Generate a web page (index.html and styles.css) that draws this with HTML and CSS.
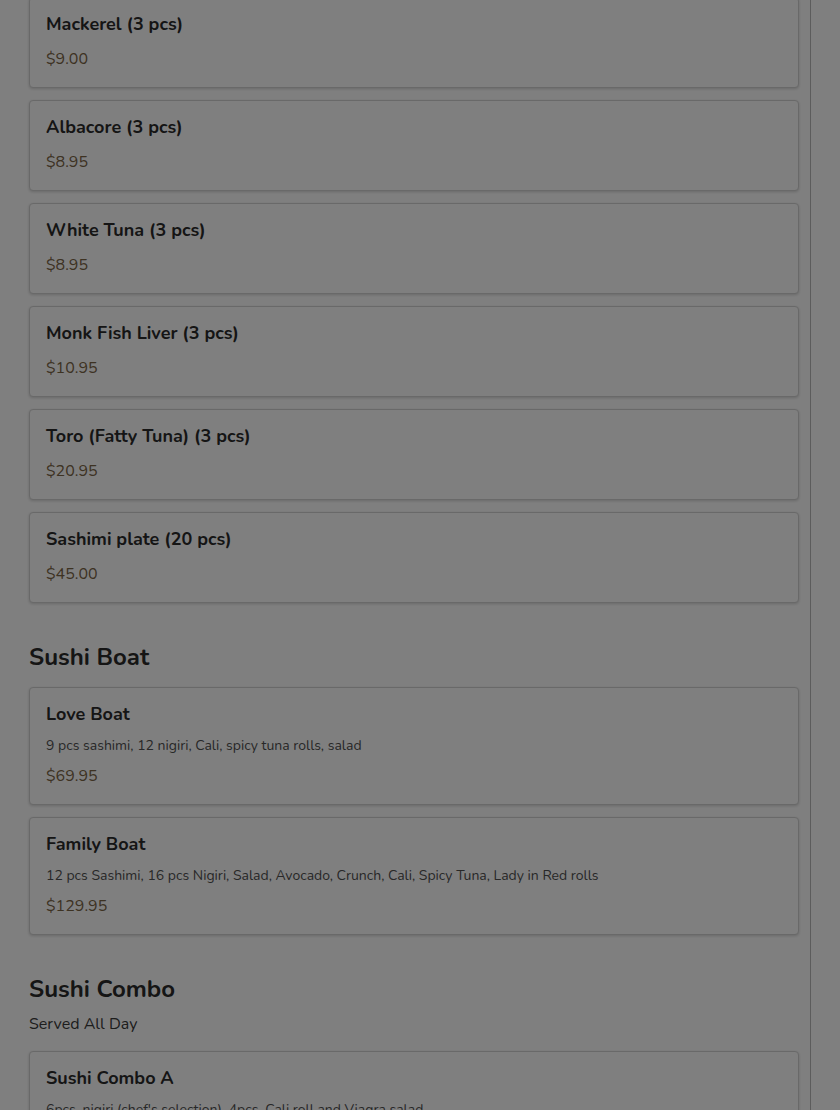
FILE: index.html
```html
<!DOCTYPE html>
<html>
<head>
<meta charset="utf-8">
<link rel="stylesheet" href="styles.css">
</head>
<body>
<div class="page">
  <main class="menu">
    <section class="section first">
      <div class="items">
        <div class="card"><div class="name">Mackerel (3 pcs)</div><div class="price">$9.00</div></div>
        <div class="card"><div class="name">Albacore (3 pcs)</div><div class="price">$8.95</div></div>
        <div class="card"><div class="name">White Tuna (3 pcs)</div><div class="price">$8.95</div></div>
        <div class="card"><div class="name">Monk Fish Liver (3 pcs)</div><div class="price">$10.95</div></div>
        <div class="card"><div class="name">Toro (Fatty Tuna) (3 pcs)</div><div class="price">$20.95</div></div>
        <div class="card"><div class="name">Sashimi plate (20 pcs)</div><div class="price">$45.00</div></div>
      </div>
    </section>
    <section class="section">
      <h2 class="heading">Sushi Boat</h2>
      <div class="items">
        <div class="card"><div class="name">Love Boat</div><div class="desc">9 pcs sashimi, 12 nigiri, Cali, spicy tuna rolls, salad</div><div class="price">$69.95</div></div>
        <div class="card"><div class="name">Family Boat</div><div class="desc">12 pcs Sashimi, 16 pcs Nigiri, Salad, Avocado, Crunch, Cali, Spicy Tuna, Lady in Red rolls</div><div class="price">$129.95</div></div>
      </div>
    </section>
    <section class="section">
      <h2 class="heading">Sushi Combo</h2>
      <p class="sub">Served All Day</p>
      <div class="items">
        <div class="card"><div class="name">Sushi Combo A</div><div class="desc">6pcs. nigiri (chef's selection), 4pcs. Cali roll and Viagra salad</div><div class="price">$24.95</div></div>
      </div>
    </section>
  </main>
</div>
<div class="overlay"></div>
</body>
</html>
```
FILE: styles.css
```css
html, body {
  margin: 0;
  padding: 0;
  background: #fff;
  height: 1110px;
  overflow: hidden;
}
body {
  font-family: "Nunito", "Lato", "Noto Sans", sans-serif;
  color: #2b2b2b;
}
.page {
  display: flex;
}
.menu {
  width: 811px;
  box-sizing: border-box;
  border-right: 1px solid #b8b8b8;
  padding: 0 11px 0 29px;
  margin-top: -3px;
}
.section {
  padding-top: 39px;
}
.section.first {
  padding-top: 0;
}
.items {
  display: flex;
  flex-direction: column;
  gap: 12px;
}
.card {
  border: 1px solid #d2d2d2;
  border-radius: 4px;
  background: #fff;
  box-shadow: 0 1px 3px rgba(0,0,0,0.18);
  padding: 14px 16px 17px;
  display: flex;
  flex-direction: column;
}
.name {
  font-size: 18px;
  font-weight: 700;
  line-height: 24px;
  color: #2b2b2b;
}
.desc {
  font-size: 14px;
  line-height: 20px;
  color: #505050;
  margin-top: 10px;
}
.price {
  font-size: 16px;
  line-height: 22px;
  color: #7a6445;
  margin-top: 12px;
}
.desc + .price {
  margin-top: 9px;
}
.heading {
  margin: 0 0 15px;
  font-size: 24px;
  line-height: 30px;
  font-weight: 700;
  color: #2b2b2b;
}
.sub {
  margin: -6px 0 16px;
  font-size: 16px;
  line-height: 22px;
  color: #3a3a3a;
}
.overlay {
  position: fixed;
  inset: 0;
  background: rgba(0,0,0,0.5);
}
```
